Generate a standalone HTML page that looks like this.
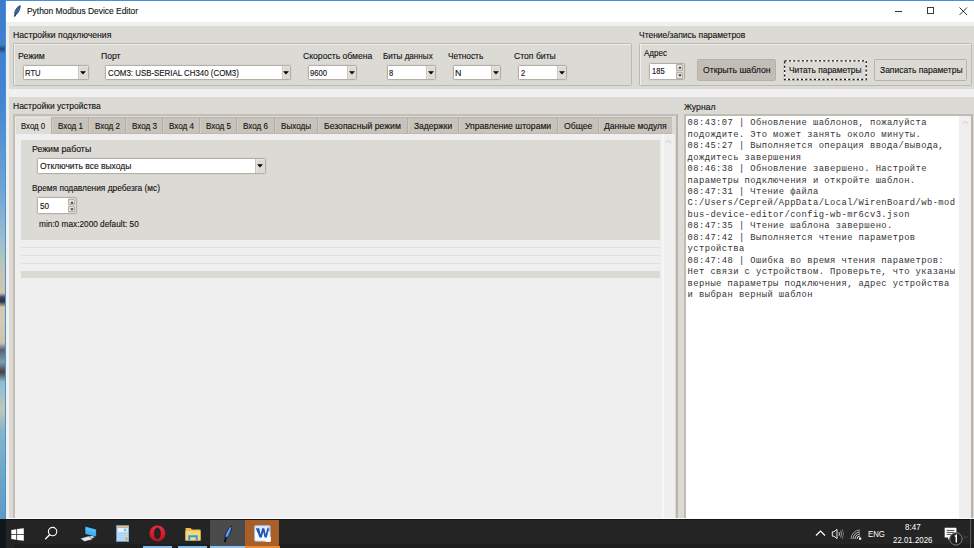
<!DOCTYPE html>
<html><head><meta charset="utf-8"><style>
*{margin:0;padding:0;box-sizing:border-box}
html,body{width:974px;height:548px;overflow:hidden;background:#f0f0f0;position:relative;font-family:"Liberation Sans",sans-serif}
.a{position:absolute}
.t{position:absolute;white-space:pre;font-family:"Liberation Sans",sans-serif;font-size:8.9px;line-height:11px;color:#111;transform-origin:0 0;-webkit-text-stroke:0.12px currentColor}
.g{background:#dcdad5}
.lf{position:absolute;border:1.2px solid #bdb9b1;box-shadow:inset 1px 1px 0 #f1efeb;border-radius:1.5px}
.cb{position:absolute;background:#fff;border:1px solid #b3afa7;border-radius:1.5px;box-shadow:0 0 0 0.5px #d0cdc7}
.cbb{position:absolute;top:0;bottom:0;right:0;background:#dcdad5;border-left:1px solid #cbc7c0;box-shadow:inset 1px 1px 0 #e6e4e0}
.arr{position:absolute;width:0;height:0;border-left:2.9px solid transparent;border-right:2.9px solid transparent;border-top:3.3px solid #000}
.sb{position:absolute;background:#e2e0dc;border:1px solid #b4b0a8;border-radius:1px}
.ua{position:absolute;width:0;height:0;border-left:1.5px solid transparent;border-right:1.5px solid transparent;border-bottom:2px solid #111}
.da{position:absolute;width:0;height:0;border-left:1.5px solid transparent;border-right:1.5px solid transparent;border-top:2px solid #111}
.bt{position:absolute;background:#dcdad5;border:1px solid #b7b3ab;border-radius:1.5px}
.tab{position:absolute;top:117.4px;height:16.4px;background:#c7c3bb;border-left:1px solid #b3afa7;border-top:1px solid #bcb8b0;box-shadow:inset 1px 0 0 #d0cdc7;border-bottom:1px solid #bdb9b1}
.log{position:absolute;white-space:pre;font-family:"Liberation Mono",monospace;font-size:8.8px;letter-spacing:0.42px;line-height:11.43px;color:#333}

</style></head><body>
<div class="a" style="left:0;top:0;width:5.2px;height:519px;background:linear-gradient(#3b7cce 0px,#4385d0 100px,#6fa5d2 190px,#9cbfca 240px,#b5c6b9 262px,#cdc4ad 280px,#d6cab0 320px,#cdc3ad 343px,#55636f 350px,#7d9fb0 362px,#4a3f38 372px,#8fbdd2 382px,#a9c4c6 398px,#c4c6b3 410px,#88b5c8 430px,#6aa5c6 480px,#5e9cc2 519px)"></div><div class="a" style="left:0;top:293px;width:5px;height:14px;background:linear-gradient(#cfc5ad,#3a4a66 30%,#2b3140 60%,#cfc5ad)"></div><div class="a" style="left:0;top:44px;width:5px;height:10px;background:linear-gradient(#4385d0,#27487a 50%,#4385d0)"></div>
<div class="a" style="left:5px;top:0;width:969px;height:1px;background:#4a8fdc"></div>
<div class="a" style="left:5px;top:0;width:1px;height:519px;background:#4a8fdc"></div>
<div class="a" style="left:6px;top:1px;width:968px;height:21px;background:#fff"></div>
<svg class="a" style="left:13px;top:4.5px" width="8" height="12" viewBox="0 0 8 12">
 <path d="M7.2 0.6 C5.4 1.2 3.4 3.2 2.3 5.6 C1.6 7.1 1.5 8.5 1.9 9.4 L1.4 11.3 L2.1 11.4 L2.6 9.8 C3.9 9.3 5.3 7.7 6.1 5.8 C6.9 3.9 7.3 2.1 7.2 0.6 Z" fill="#4a80d4" stroke="#13234a" stroke-width="0.7"/>
 <path d="M6.6 1.6 C5 3.5 3.6 6.2 2.2 10.5" stroke="#0d1830" stroke-width="0.6" fill="none"/></svg>
<div class="a" style="left:895px;top:10.5px;width:7px;height:1px;background:#333"></div>
<div class="a" style="left:927px;top:7.2px;width:7.2px;height:7.2px;border:1px solid #3a3a3a"></div>
<svg class="a" style="left:959px;top:6.5px" width="9" height="9" viewBox="0 0 9 9"><path d="M0.5 0.5 L8 8 M8 0.5 L0.5 8" stroke="#333" stroke-width="1"/></svg>
<div class="a g" style="left:9px;top:26px;width:965px;height:63px"></div>
<div class="a g" style="left:9px;top:97px;width:965px;height:422px"></div>
<div class="lf" style="left:12.5px;top:42.5px;width:619.5px;height:43.5px"></div>
<div class="lf" style="left:639.2px;top:42.5px;width:333.2px;height:43.5px"></div>
<div class="cb" style="left:23.3px;top:65.3px;width:65.4px;height:14.5px"><div class="cbb" style="width:9.3px"></div></div><svg class="a" style="left:80.35px;top:70.65px" width="6" height="4" viewBox="0 0 6 4"><path d="M0.1 0.3 H5.9 L3 3.6 Z" fill="#000"/></svg>
<div class="cb" style="left:105.4px;top:65.3px;width:186.0px;height:14.5px"><div class="cbb" style="width:8.9px"></div></div><svg class="a" style="left:283.25px;top:70.65px" width="6" height="4" viewBox="0 0 6 4"><path d="M0.1 0.3 H5.9 L3 3.6 Z" fill="#000"/></svg>
<div class="cb" style="left:308.3px;top:65.3px;width:49.0px;height:14.5px"><div class="cbb" style="width:9.8px"></div></div><svg class="a" style="left:348.70px;top:70.65px" width="6" height="4" viewBox="0 0 6 4"><path d="M0.1 0.3 H5.9 L3 3.6 Z" fill="#000"/></svg>
<div class="cb" style="left:387.3px;top:65.3px;width:48.9px;height:14.5px"><div class="cbb" style="width:9.2px"></div></div><svg class="a" style="left:427.90px;top:70.65px" width="6" height="4" viewBox="0 0 6 4"><path d="M0.1 0.3 H5.9 L3 3.6 Z" fill="#000"/></svg>
<div class="cb" style="left:452.9px;top:65.3px;width:48.6px;height:14.5px"><div class="cbb" style="width:9.2px"></div></div><svg class="a" style="left:493.20px;top:70.65px" width="6" height="4" viewBox="0 0 6 4"><path d="M0.1 0.3 H5.9 L3 3.6 Z" fill="#000"/></svg>
<div class="cb" style="left:518.2px;top:65.3px;width:49.0px;height:14.5px"><div class="cbb" style="width:9.2px"></div></div><svg class="a" style="left:558.90px;top:70.65px" width="6" height="4" viewBox="0 0 6 4"><path d="M0.1 0.3 H5.9 L3 3.6 Z" fill="#000"/></svg>
<div class="cb" style="left:649.1px;top:62.5px;width:35.5px;height:17.2px"><div class="a" style="left:26.4px;top:0;width:7.1px;height:15.2px;background:#dcdad5"></div><div class="sb" style="left:26.4px;top:0.6px;width:6.1px;height:6.9px"></div><div class="sb" style="left:26.4px;top:8.4px;width:6.1px;height:6.9px"></div></div><svg class="a" style="left:677.55px;top:66.02px" width="4" height="3" viewBox="0 0 4 3"><path d="M0.3 2.4 H3.7 L2 0.4 Z" fill="#1a1a1a"/></svg><svg class="a" style="left:677.55px;top:73.77px" width="4" height="3" viewBox="0 0 4 3"><path d="M0.3 0.6 H3.7 L2 2.6 Z" fill="#1a1a1a"/></svg>
<div class="bt" style="left:696.7px;top:59.1px;width:79px;height:21.8px;background:#c2beb6;border-color:#b5b1a9"></div>
<div class="bt" style="left:783.3px;top:59.5px;width:83.6px;height:21.2px;border-color:#cfccc6"></div>
<svg class="a" style="left:783px;top:59px" width="85" height="23" viewBox="0 0 85 23"><rect x="1.6" y="1.9" width="81.6" height="18.6" fill="none" stroke="#fff" stroke-width="1.2" stroke-dasharray="2 2.3" stroke-dashoffset="2"/><rect x="1.6" y="1.9" width="81.6" height="18.6" fill="none" stroke="#1a1a1a" stroke-width="1.3" stroke-dasharray="2 2.3"/></svg>
<div class="bt" style="left:874.4px;top:59.4px;width:92.9px;height:21.2px"></div>
<div class="a" style="left:12.7px;top:113.8px;width:665.4px;height:405.2px;border:2.2px solid #c3bfb8;border-bottom:none;border-right-color:#b9b5ad"></div>
<div class="a" style="left:14.8px;top:116.5px;width:660.4px;height:1px;background:#e6e4e0"></div>
<div class="a" style="left:14.8px;top:133.8px;width:660.4px;height:385.2px;background:#efefef"></div>
<div class="tab" style="left:50.6px;width:37.3px"></div>
<div class="tab" style="left:87.9px;width:37.4px"></div>
<div class="tab" style="left:125.3px;width:36.8px"></div>
<div class="tab" style="left:162.1px;width:36.8px"></div>
<div class="tab" style="left:198.9px;width:37.5px"></div>
<div class="tab" style="left:236.4px;width:37.3px"></div>
<div class="tab" style="left:273.7px;width:43.4px"></div>
<div class="tab" style="left:317.1px;width:90.1px"></div>
<div class="tab" style="left:407.2px;width:51.0px"></div>
<div class="tab" style="left:458.2px;width:98.5px"></div>
<div class="tab" style="left:556.7px;width:41.4px"></div>
<div class="tab" style="left:598.1px;width:73.9px"></div>
<div class="a" style="left:14.8px;top:116.5px;width:36.3px;height:17.5px;background:#dfddd8;box-shadow:inset 1px 1px 0 #eceae6"></div>
<div class="a g" style="left:21px;top:140px;width:639px;height:99.6px"></div>
<div class="a" style="left:661.7px;top:134px;width:2.3px;height:385px;background:#f7f7f7"></div>
<svg class="a" style="left:665px;top:139px" width="7" height="5" viewBox="0 0 7 5"><path d="M0.8 4 L3.5 1.2 L6.2 4" stroke="#c8c8c8" stroke-width="1" fill="none"/></svg>
<div class="cb" style="left:37.1px;top:158px;width:228.8px;height:15.7px"><div class="cbb" style="width:9.6px"></div></div><svg class="a" style="left:257.40px;top:163.95px" width="6" height="4" viewBox="0 0 6 4"><path d="M0.1 0.3 H5.9 L3 3.6 Z" fill="#000"/></svg>
<div class="cb" style="left:37.4px;top:197.4px;width:39.2px;height:16.2px"><div class="a" style="left:30.1px;top:0;width:7.1px;height:14.2px;background:#dcdad5"></div><div class="sb" style="left:30.1px;top:0.6px;width:6.1px;height:6.3px"></div><div class="sb" style="left:30.1px;top:7.8px;width:6.1px;height:6.3px"></div></div><svg class="a" style="left:69.55px;top:200.68px" width="4" height="3" viewBox="0 0 4 3"><path d="M0.3 2.4 H3.7 L2 0.4 Z" fill="#1a1a1a"/></svg><svg class="a" style="left:69.55px;top:207.93px" width="4" height="3" viewBox="0 0 4 3"><path d="M0.3 0.6 H3.7 L2 2.6 Z" fill="#1a1a1a"/></svg>
<div class="a" style="left:21px;top:246.8px;width:639px;height:1.2px;background:#e2e0dc"></div>
<div class="a" style="left:21px;top:254.8px;width:639px;height:1.2px;background:#e2e0dc"></div>
<div class="a" style="left:21px;top:262.6px;width:639px;height:1.2px;background:#e2e0dc"></div>
<div class="a g" style="left:21px;top:270.5px;width:639px;height:7.4px"></div>
<div class="a" style="left:684.4px;top:114.4px;width:288.4px;height:404.6px;background:#fff;border:2px solid #c0bcb5;border-bottom:none;border-right-color:#b8b4ad"></div>
<div class="a" style="left:959.3px;top:116.4px;width:11.5px;height:402.6px;background:#efefef"></div>
<svg class="a" style="left:962px;top:119.5px" width="7" height="5" viewBox="0 0 7 5"><path d="M0.8 4 L3.5 1.2 L6.2 4" stroke="#c8c8c8" stroke-width="1" fill="none"/></svg>
<div class="log" style="left:687.6px;top:118.4px">08:43:07 | Обновление шаблонов, пожалуйста
подождите. Это может занять около минуты.
08:45:27 | Выполняется операция ввода/вывода,
дождитесь завершения
08:46:38 | Обновление завершено. Настройте
параметры подключения и откройте шаблон.
08:47:31 | Чтение файла
C:/Users/Сергей/AppData/Local/WirenBoard/wb-mod
bus-device-editor/config-wb-mr6cv3.json
08:47:35 | Чтение шаблона завершено.
08:47:42 | Выполняется чтение параметров
устройства
08:47:48 | Ошибка во время чтения параметров:
Нет связи с устройством. Проверьте, что указаны
верные параметры подключения, адрес устройства
и выбран верный шаблон</div>
<div class="a" style="left:0;top:519.2px;width:974px;height:28.8px;background:#242424"></div>
<div class="a" style="left:0;top:519.2px;width:974px;height:1.3px;background:#151515"></div>
<div class="a" style="left:14px;top:544px;width:960px;height:4px;background:#1e1e1e"></div>
<div class="a" style="left:0;top:519.2px;width:5.5px;height:28.8px;background:#11161b"></div>
<div class="a" style="left:5.5px;top:518px;width:968.5px;height:1.2px;background:#fafafa"></div>
<!-- taskbar icons -->


<svg class="a" style="left:10.5px;top:527.5px" width="14" height="14" viewBox="0 0 14 14">
 <path d="M0.3 1.9 L5.3 1.2 V6.2 H0.3 Z M6.1 1.1 L12.8 0.2 V6.2 H6.1 Z M0.3 6.9 H5.3 V11.8 L0.3 11.1 Z M6.1 6.9 H12.8 V12.8 L6.1 11.9 Z" fill="#fff"/>
</svg>
<svg class="a" style="left:44px;top:526px" width="14" height="15" viewBox="0 0 14 15">
 <circle cx="8.6" cy="5.6" r="4.2" stroke="#fff" stroke-width="1.1" fill="none"/>
 <path d="M5.6 8.7 L1.2 13.3" stroke="#fff" stroke-width="1.3"/>
</svg>
<svg class="a" style="left:78.5px;top:525px" width="19" height="18" viewBox="0 0 19 18">
 <path d="M6 1.2 L17.4 4.2 V12 L6 9.2 Z" fill="#3fb2f4" stroke="#0c1a26" stroke-width="0.6"/>
 <path d="M6.6 2 L16.8 4.7 V8 L6.6 5.5 Z" fill="#6cc6f8" opacity="0.5"/>
 <path d="M1 13.6 L9.5 11 L13.8 14.4 L5.5 16.6 Z" fill="#e6e6e6" stroke="#141414" stroke-width="0.5"/>
 <path d="M10 11.6 L13.5 10.8 L15.5 12.6 L12.5 13.4 Z" fill="#d0d0d0"/>
</svg>
<svg class="a" style="left:115.5px;top:525px" width="13.5" height="17" viewBox="0 0 13.5 17">
 <rect x="0.6" y="0.6" width="12.3" height="15.8" fill="#bcdcf4" stroke="#5d9fd6" stroke-width="0.9"/>
 <rect x="1.6" y="1.6" width="10.3" height="1.2" fill="#f3a13a"/>
 <rect x="1.8" y="3.2" width="9.9" height="3.6" fill="#e9f4fc"/>
 <circle cx="9.2" cy="5" r="1.5" fill="#8fb6dc"/>
 <g fill="#a7cdec"><rect x="1.8" y="8" width="9.9" height="0.8"/><rect x="1.8" y="10" width="9.9" height="0.6"/><rect x="1.8" y="12" width="9.9" height="0.6"/><rect x="1.8" y="14" width="9.9" height="0.6"/><rect x="4.5" y="8" width="0.6" height="7"/><rect x="7.5" y="8" width="0.6" height="7"/></g>
 <rect x="9.6" y="12.2" width="1.8" height="3" fill="#f0a030"/>
</svg>
<svg class="a" style="left:149px;top:525px" width="17" height="17" viewBox="0 0 17 17">
 <defs><linearGradient id="og" x1="0" y1="0" x2="0" y2="1"><stop offset="0" stop-color="#f02a38"/><stop offset="1" stop-color="#c0101e"/></linearGradient></defs>
 <ellipse cx="8.4" cy="8.4" rx="7.9" ry="7.9" fill="url(#og)"/>
 <ellipse cx="8.4" cy="8.4" rx="3.4" ry="5.9" fill="#242424"/>
</svg>
<div class="a" style="left:143px;top:546px;width:29px;height:2px;background:#7fbcef"></div>
<svg class="a" style="left:184.5px;top:526.5px" width="16" height="14" viewBox="0 0 16 14">
 <path d="M0.5 1 H5.5 L7 2.5 H15.5 V13.5 H0.5 Z" fill="#e9bd4c"/>
 <path d="M0.5 3.8 H15.5 V13.5 H0.5 Z" fill="#f6d878"/>
 <path d="M3.2 8.2 H12.8 V13.5 H10.8 V10.3 H5.2 V13.5 H3.2 Z" fill="#2e9de8"/>
</svg>
<div class="a" style="left:178px;top:546px;width:29px;height:2px;background:#7fbcef"></div>
<div class="a" style="left:210px;top:520.3px;width:34.6px;height:27.7px;background:#4b4b4b"></div>
<div class="a" style="left:210px;top:546px;width:34.5px;height:2px;background:#8cc6f2"></div>
<svg class="a" style="left:222px;top:524.5px" width="11" height="18" viewBox="0 0 11 18">
 <path d="M9.6 0.8 C7.6 2 5.2 5 3.8 8.4 C3 10.4 2.8 12.2 3.2 13.4 L2.6 16.8 L3.3 16.9 L4 13.9 C5.8 13 7.4 10.6 8.4 8 C9.4 5.4 9.8 2.8 9.6 0.8 Z" fill="#3f78cf" stroke="#0e1a33" stroke-width="0.75"/>
 <path d="M8.6 2.5 C7 5 5.6 8 4.6 11" stroke="#9cc2f0" stroke-width="0.8" fill="none"/>
 <path d="M4.2 12.2 L2.8 17" stroke="#000" stroke-width="1.1"/>
</svg>
<div class="a" style="left:244.8px;top:520.3px;width:34.7px;height:27.7px;background:#a95f27"></div>
<div class="a" style="left:245px;top:546px;width:34.5px;height:2px;background:#ef8a2e"></div>
<svg class="a" style="left:253.5px;top:524.5px" width="17" height="17" viewBox="0 0 17 17">
 <defs><linearGradient id="wg" x1="0" y1="0" x2="0" y2="1"><stop offset="0" stop-color="#cfe2fa"/><stop offset="0.5" stop-color="#ffffff"/><stop offset="1" stop-color="#f4f8fd"/></linearGradient></defs>
 <rect x="0.6" y="0.6" width="15.6" height="15.6" rx="1" fill="url(#wg)" stroke="#9fbde6" stroke-width="0.8"/>
 <path d="M1.8 3.2 H5.2 L6.6 9.6 L8.1 3.2 H10.3 L11.8 9.6 L13.2 3.2 H15.2 L12.8 12.6 H10.6 L9.2 6.9 L7.8 12.6 H5.6 Z" fill="#1c55b6"/>
 <path d="M12.5 13.5 L16.8 11.6 L16.8 16.8 L11.2 16.8 Z" fill="#fff"/>
 <path d="M13.8 2.5 L15.5 2.5 L15.5 7 Z" fill="#5b8fd8"/>
</svg>
<!-- tray -->
<svg class="a" style="left:815px;top:529px" width="11" height="8" viewBox="0 0 11 8"><path d="M1 6.5 L5.5 2 L10 6.5" stroke="#fff" stroke-width="1.2" fill="none"/></svg>
<svg class="a" style="left:831px;top:528px" width="14" height="12" viewBox="0 0 14 12">
 <path d="M1.3 3.8 H3 L6 1.3 V10.7 L3 8.2 H1.3 Z" stroke="#e8e8e8" stroke-width="1" fill="#2a2a2a"/>
 <path d="M8 4.2 Q9 6 8 7.8" stroke="#ddd" stroke-width="0.9" fill="none"/>
 <path d="M9.6 2.6 Q11.4 6 9.6 9.4" stroke="#aaa" stroke-width="0.9" fill="none"/>
 <path d="M11.2 1 Q13.8 6 11.2 11" stroke="#777" stroke-width="0.9" fill="none"/>
</svg>
<svg class="a" style="left:850px;top:528.6px" width="12" height="11" viewBox="0 0 12 11">
 <path d="M1 10 A9 9 0 0 1 10 1" stroke="#aaa" stroke-width="0.9" fill="none"/>
 <path d="M3 10 A7 7 0 0 1 10 3" stroke="#ccc" stroke-width="0.9" fill="none"/>
 <path d="M5 10 A5 5 0 0 1 10 5" stroke="#ddd" stroke-width="0.9" fill="none"/>
 <path d="M7 10 A3 3 0 0 1 10 7" stroke="#eee" stroke-width="0.9" fill="none"/>
 <rect x="9" y="8.5" width="2.2" height="2.2" fill="#fff"/>
</svg>
<svg class="a" style="left:943px;top:526px" width="22" height="22" viewBox="0 0 22 22">
 <path d="M1.7 1.7 H13.4 V11.6 H7.5 L5.2 14 V11.6 H1.7 Z" fill="#fff"/>
 <path d="M3.6 4.4 H11.4 M3.6 6.4 H11.4 M3.6 8.4 H8.5" stroke="#3a3a3a" stroke-width="0.9"/>
 <circle cx="12.9" cy="12.9" r="6.2" fill="#202020" stroke="#8a8a8a" stroke-width="0.9"/>
 <path d="M11.8 10.3 L13.3 9.3 V16.6" stroke="#fff" stroke-width="1.4" fill="none"/>
 <path d="M21 11.5 L23 13.5 L25 11.5" stroke="#555" stroke-width="0.7" fill="none"/>
</svg>
<div class="a" style="left:970.2px;top:519.4px;width:1.2px;height:28.6px;background:#5a5a5a"></div>
<svg class="a" style="left:963px;top:535px" width="6" height="4" viewBox="0 0 6 4"><path d="M0.5 0.5 L3 3 L5.5 0.5" stroke="#4a4a4a" stroke-width="0.8" fill="none"/></svg>

<div class="t" style="left:27.00px;top:6.00px;font-size:9.3px;transform:scaleX(0.9070);">Python Modbus Device Editor</div>
<div class="t" style="left:13.10px;top:30.00px;transform:scaleX(0.9787);">Настройки подключения</div>
<div class="t" style="left:18.00px;top:51.00px;transform:scaleX(0.9795);">Режим</div>
<div class="t" style="left:100.90px;top:51.00px;transform:scaleX(0.9673);">Порт</div>
<div class="t" style="left:302.80px;top:51.00px;transform:scaleX(0.9685);">Скорость обмена</div>
<div class="t" style="left:382.70px;top:51.00px;transform:scaleX(0.9129);">Биты данных</div>
<div class="t" style="left:448.00px;top:51.00px;transform:scaleX(0.9378);">Четность</div>
<div class="t" style="left:513.50px;top:51.00px;transform:scaleX(0.9698);">Стоп биты</div>
<div class="t" style="left:25.00px;top:68.00px;transform:scaleX(0.8602);">RTU</div>
<div class="t" style="left:107.80px;top:68.00px;transform:scaleX(0.8895);">COM3: USB-SERIAL CH340 (COM3)</div>
<div class="t" style="left:310.00px;top:68.00px;transform:scaleX(0.8583);">9600</div>
<div class="t" style="left:389.20px;top:68.00px;transform:scaleX(0.8500);">8</div>
<div class="t" style="left:455.00px;top:68.00px;">N</div>
<div class="t" style="left:520.70px;top:68.00px;transform:scaleX(0.8500);">2</div>
<div class="t" style="left:638.90px;top:30.00px;transform:scaleX(0.9546);">Чтение/запись параметров</div>
<div class="t" style="left:644.00px;top:48.00px;transform:scaleX(0.9010);">Адрес</div>
<div class="t" style="left:652.00px;top:66.00px;transform:scaleX(0.8500);">185</div>
<div class="t" style="left:702.50px;top:65.00px;transform:scaleX(0.9758);">Открыть шаблон</div>
<div class="t" style="left:789.00px;top:65.00px;transform:scaleX(0.9489);">Читать параметры</div>
<div class="t" style="left:879.70px;top:65.00px;transform:scaleX(0.9586);">Записать параметры</div>
<div class="t" style="left:13.10px;top:101.00px;transform:scaleX(0.9567);">Настройки устройства</div>
<div class="t" style="left:684.30px;top:102.00px;transform:scaleX(0.9719);">Журнал</div>
<div class="t" style="left:20.90px;top:121.00px;transform:scaleX(0.8750);">Вход 0</div>
<div class="t" style="left:57.50px;top:121.00px;transform:scaleX(0.9113);">Вход 1</div>
<div class="t" style="left:94.85px;top:121.00px;transform:scaleX(0.9113);">Вход 2</div>
<div class="t" style="left:131.95px;top:121.00px;transform:scaleX(0.9113);">Вход 3</div>
<div class="t" style="left:168.75px;top:121.00px;transform:scaleX(0.9113);">Вход 4</div>
<div class="t" style="left:205.90px;top:121.00px;transform:scaleX(0.9113);">Вход 5</div>
<div class="t" style="left:243.30px;top:121.00px;transform:scaleX(0.9113);">Вход 6</div>
<div class="t" style="left:281.37px;top:121.00px;transform:scaleX(0.9113);">Выходы</div>
<div class="t" style="left:324.00px;top:121.00px;transform:scaleX(0.9707);">Безопасный режим</div>
<div class="t" style="left:413.80px;top:121.00px;transform:scaleX(0.9535);">Задержки</div>
<div class="t" style="left:464.80px;top:121.00px;transform:scaleX(0.9708);">Управление шторами</div>
<div class="t" style="left:563.80px;top:121.00px;transform:scaleX(0.9751);">Общее</div>
<div class="t" style="left:604.00px;top:121.00px;transform:scaleX(0.9681);">Данные модуля</div>
<div class="t" style="left:32.00px;top:144.00px;transform:scaleX(0.9868);">Режим работы</div>
<div class="t" style="left:39.50px;top:161.00px;transform:scaleX(0.9566);">Отключить все выходы</div>
<div class="t" style="left:32.00px;top:183.00px;transform:scaleX(0.9394);">Время подавления дребезга (мс)</div>
<div class="t" style="left:39.90px;top:201.00px;transform:scaleX(0.9259);">50</div>
<div class="t" style="left:38.70px;top:219.00px;transform:scaleX(0.9316);">min:0 max:2000 default: 50</div>
<div class="t" style="left:867.90px;top:529.00px;font-size:9.2px;color:#ffffff;transform:scaleX(0.8500);-webkit-text-stroke:0;">ENG</div>
<div class="t" style="left:904.50px;top:522.00px;font-size:9.2px;color:#ffffff;transform:scaleX(0.8722);-webkit-text-stroke:0;">8:47</div>
<div class="t" style="left:892.90px;top:535.00px;font-size:9.2px;color:#ffffff;transform:scaleX(0.8567);-webkit-text-stroke:0;">22.01.2026</div>
</body></html>
